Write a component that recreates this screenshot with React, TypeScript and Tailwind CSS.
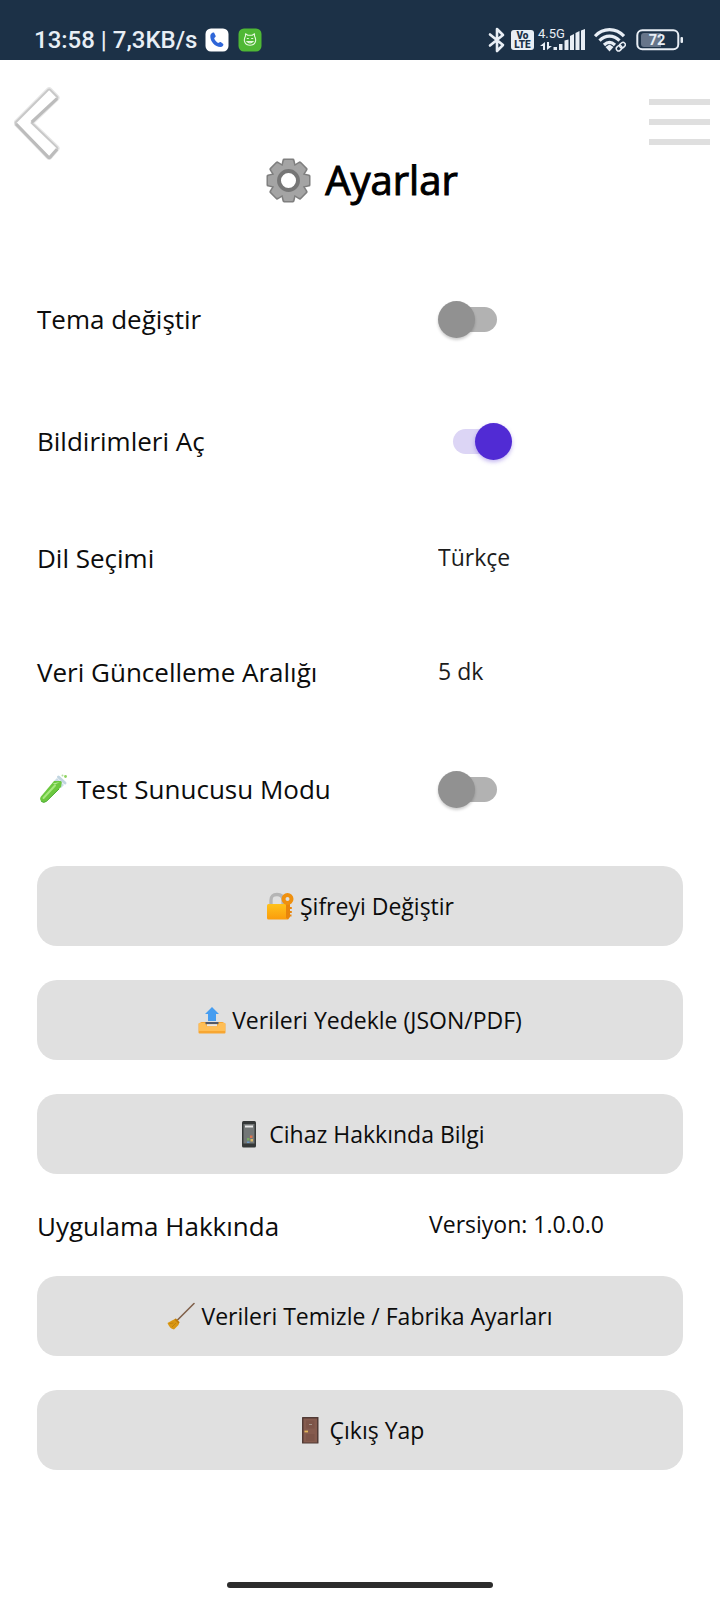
import { useState } from "react";
import type { ReactNode } from "react";

function StatusBar() {
  return (
    <div className="flex h-15 items-end justify-between bg-[#1c3147] pr-[37px] pb-2 pl-[34px] font-[Roboto,sans-serif] text-[#e8eef5]">
      <div className="flex h-6 items-center">
        <span className="text-2xl leading-6 font-medium">13:58 | 7,3KB/s</span>
        <svg className="ml-2 size-6" viewBox="0 0 24 24" aria-hidden="true">
          <rect x=".5" y=".5" width="23" height="23" rx="5.5" fill="#fff" />
          <path d="M9 4.500c-1.400-.5-3.500.8-3.700 3.300C5 13.500 10 19 15.500 19c2 0 3.300-1.500 2.800-3l-2.600-2c-1-.4-1.900.8-2.500 1-1.500-.5-3.600-3-4-4.700.3-.8 1.700-1.300 1.500-2.400z" fill="#2f66d8" />
        </svg>
        <svg className="ml-[9px] size-6" viewBox="0 0 24 24" aria-hidden="true">
          <rect x=".5" y=".5" width="23" height="23" rx="5.500" fill="#4fb835" />
          <path d="M7.500 8 7.500 5.800l2.300 1.400h4.400l2.300-1.400V8c2.500 4.500.8 9.300-4.500 9.300S5 12.500 7.500 8z" fill="none" stroke="#e4f8dd" strokeWidth="1.100" strokeLinejoin="round" />
          <path d="M8.800 10.500h2M13.200 10.500h2M9 13.500c1.500 1.800 4.500 1.800 6 0z" fill="none" stroke="#e4f8dd" strokeWidth="1.100" />
        </svg>
      </div>
      <div className="flex h-6 items-center">
        <svg className="h-[26px] w-[18px]" viewBox="0 0 18 26" fill="none" stroke="currentColor" strokeWidth="2.600" strokeLinejoin="round" strokeLinecap="round" aria-hidden="true">
          <path d="M2 7.500 15 18 9 24V2l6 6L2 18.500" />
        </svg>
        <span className="ml-[5px] flex h-5 w-[23px] flex-col items-center justify-center rounded-[3px] bg-[#e8eef5] text-[10px] leading-[9px] font-black text-[#1c3147]">
          <span>Vo</span>
          <span>LTE</span>
        </span>
        <svg className="ml-1 h-7 w-12 overflow-visible" viewBox="0 -2 48 28" fill="currentColor" aria-hidden="true">
          <text x="0" y="10" fontSize="13" fontFamily="Roboto, sans-serif">4.5G</text>
          <path d="M7 22h-2v-4H2l5-4zM9 14h2v4h3l-5 4zM15.500 19h3.500v3h-3.500zM21 16h3.500v6H21zM26.500 12.500l4-1V22h-4zM32 8l4-2v16h-4zM37.500 5l4-2v19h-4zM43 2.500 47 1v21h-4z" />
        </svg>
        <svg className="ml-2 h-6 w-8" viewBox="0 0 32 24" fill="none" stroke="currentColor" strokeWidth="3.200" aria-hidden="true">
          <path d="M1 8.200C9-.5 22-.5 30 8.200M5.500 12.700c6-6 14-6 20 0M10 17c3.500-3.300 7.500-3.300 11 0" />
          <path d="m11.500 19 4-2.500 4 2.500-4 4.500z" fill="currentColor" stroke="none" />
          <g strokeWidth="1.500" transform="rotate(-42 27 18.500)">
            <rect x="21.500" y="16.200" width="6" height="4.600" rx="2.300" />
            <rect x="26" y="16.200" width="6" height="4.600" rx="2.300" />
          </g>
        </svg>
        <svg className="ml-[10px] h-6 w-[47px]" viewBox="0 0 47 24" aria-hidden="true">
          <rect x="1.300" y="2.300" width="41" height="19" rx="5" fill="none" stroke="currentColor" strokeWidth="2" />
          <path d="M8 5h17v14H8q-3 0-3-3V8q0-3 3-3z" fill="#66758a" />
          <rect x="44.500" y="9" width="2.500" height="6" rx="1" fill="currentColor" />
          <text x="21" y="17" textAnchor="middle" fontSize="14.500" fontWeight="700" fontFamily="Roboto, sans-serif" fill="currentColor">72</text>
        </svg>
      </div>
    </div>
  );
}

const GEAR_ANGLES = [0, 45, 90, 135];

function GearIcon() {
  return (
    <svg className="size-[45px]" viewBox="0 0 46 46" aria-hidden="true">
      <g fill="#7f7f7f">
        {GEAR_ANGLES.map((angle) => (
          <path key={angle} transform={`rotate(${angle} 23 23)`} d="M18.500.5h9q1.500 0 1.700 1.500L31 10v26l-1.800 8q-.2 1.500-1.700 1.500h-9q-1.500 0-1.700-1.500L15 36V10l1.800-8q.2-1.500 1.700-1.500z" />
        ))}
        <circle cx="23" cy="23" r="17.500" />
      </g>
      <g fill="#a4a4a4">
        {GEAR_ANGLES.map((angle) => (
          <path key={angle} transform={`rotate(${angle} 23 23)`} d="M19.500 2h7q1 0 1.300 1L29.500 10v26l-1.700 7q-.3 1-1.300 1h-7q-1 0-1.300-1L16.500 36V10l1.700-7q.3-1 1.300-1z" />
        ))}
        <circle cx="23" cy="23" r="16" />
      </g>
      <circle cx="23" cy="23" r="9.700" fill="#fff" stroke="#767676" strokeWidth="4" />
    </svg>
  );
}

function TestTubeIcon() {
  return (
    <svg className="size-8 shrink-0" viewBox="0 0 32 32" aria-hidden="true">
      <path d="m20 5 7 7-3 3-7-7z" fill="#c9dbe6" />
      <path d="M17 8h8l-1 6L9.500 28.300q-3 2.200-5.300 0-2.200-2.300 0-5z" fill="#6cc83f" />
      <path d="m15.500 10.500 7.500-1.500-5 2.500z" fill="#b5e998" />
      <path d="M18 12.500 6.500 25" stroke="#a7e87f" strokeWidth="2" strokeLinecap="round" />
      <path d="M22 16 9.500 28.300q-3 2.200-5.300 0" fill="none" stroke="#4cab33" strokeWidth="1" />
      <path d="m21.500 4 6.500 6" stroke="#c2d5e0" strokeWidth="3" strokeLinecap="round" />
      <circle cx="28.500" cy="3.500" r="1.400" fill="#8fd460" />
      <circle cx="25.500" cy="2.500" r="1" fill="#b4dfa0" />
    </svg>
  );
}

function LockIcon() {
  return (
    <svg className="size-7" viewBox="0 0 28 28" aria-hidden="true">
      <defs>
        <linearGradient id="lock" x1="0" y1="0" x2="0" y2="1">
          <stop offset="0" stopColor="#ffc21b" />
          <stop offset="1" stopColor="#fb9c0c" />
        </linearGradient>
      </defs>
      <path d="M5 14V8q0-5.500 6-5.500T17 8v6" fill="none" stroke="#b5b5b5" strokeWidth="3.300" />
      <rect x="1" y="12" width="21.500" height="15.500" rx="1.500" fill="url(#lock)" />
      <path d="M20 10h4v15l-2 2.500-2-2z" fill="#e8850c" />
      <path d="M24 15h1.800v2H24zM24 19h1.800v2H24zM24 22.500h1.500v2H24z" fill="#e8850c" />
      <circle cx="21.500" cy="7" r="4" fill="#dfe0e0" stroke="#ef900f" strokeWidth="4" />
    </svg>
  );
}

function OutboxIcon() {
  return (
    <svg className="size-7" viewBox="0 0 28 28" aria-hidden="true">
      <path d="M3.500 16h21l3 1.500v9q0 1-1 1h-25q-1 0-1-1v-9z" fill="#f7a632" />
      <path d="M1 17h7.500v3.500h11V17H27v8H1z" fill="#ffbe55" />
      <path d="M7.500 16h13v2.200h-13z" fill="#535967" />
      <path d="M9 18.200h10v2H9z" fill="#e7e7ea" />
      <path d="M14 1 21 8h-3v7h-8V8H7z" fill="#469df0" />
    </svg>
  );
}

function PhoneIcon() {
  return (
    <svg className="size-7" viewBox="0 0 28 28" aria-hidden="true">
      <rect x="7" y="1" width="14" height="26.500" rx="1.500" fill="#353838" />
      <rect x="8.500" y="4" width="11" height="19.500" fill="#737777" />
      <path d="M10 5.500h8v2h-8z" fill="#e8e8e8" />
      <path d="M12 18h2.500v2.500H12z" fill="#78a862" />
      <path d="M15 15.500h2.500V18H15z" fill="#db7550" />
      <path d="M15.500 19H18v2.500h-2.500z" fill="#d8b968" />
      <path d="M12 21.500h2.500V23H12z" fill="#6b9acb" />
    </svg>
  );
}

function BroomIcon() {
  return (
    <svg className="size-7" viewBox="0 0 28 28" aria-hidden="true">
      <path d="M27 1.500 10 18.500" stroke="#80604b" strokeWidth="1.600" strokeLinecap="round" />
      <path d="m9 16.500 3.500 3.500-1 3-4.500 4.500q-4.500-1-6.500-6.500l4.500-2.500z" fill="#d99712" />
      <path d="m2.500 21.500 4-.5M5 25l4-4" stroke="#bb7c0c" strokeWidth=".8" />
      <path d="m8 17 4 4" stroke="#b9780f" strokeWidth="1.300" />
    </svg>
  );
}

function DoorIcon() {
  return (
    <svg className="size-7" viewBox="0 0 28 28" aria-hidden="true">
      <rect x="6" y="1" width="16.500" height="26.500" rx=".5" fill="#513a35" />
      <rect x="7.500" y="2.500" width="13.500" height="24" fill="#855b4e" />
      <path d="M10 4.500h8.500v8H10zM10 18h8.500v7H10z" fill="#7d5448" />
      <path d="M13 8.500h3" stroke="#a4968c" />
      <path d="M8.500 15.500h3.500" stroke="#e3b75b" strokeWidth="1.800" />
    </svg>
  );
}

function Switch({ id, initial = false }: { id: string; initial?: boolean }) {
  const [on, setOn] = useState(initial);
  return (
    <input
      id={id}
      type="checkbox"
      role="switch"
      checked={on}
      onChange={(e) => setOn(e.target.checked)}
      className="relative block h-9 w-[59px] cursor-pointer appearance-none before:absolute before:top-[6px] before:right-0 before:h-[25px] before:w-12 before:rounded-full before:bg-[#b2b2b2] after:absolute after:top-0 after:left-0 after:size-[37px] after:rounded-full after:bg-[#919191] after:shadow-[0_2px_3px_rgba(0,0,0,0.2)] checked:before:right-auto checked:before:left-0 checked:before:bg-[#dcd5f5] checked:after:right-0 checked:after:left-auto checked:after:bg-[#512bd4] checked:after:shadow-[0_2px_4px_rgba(81,43,212,0.35)]"
    />
  );
}

function Row({ id, label, height, icon, children }: { id: string; label: string; height: string; icon?: ReactNode; children: ReactNode }) {
  return (
    <div className={`grid grid-cols-[401fr_245fr] items-center ${height}`}>
      <label htmlFor={id} className="flex items-center gap-2 text-[26px] leading-9">
        {icon}
        {label}
      </label>
      {children}
    </div>
  );
}

function Picker({ id, options }: { id: string; options: string[] }) {
  return (
    <select id={id} className="w-full appearance-none bg-transparent pb-[2px] text-[23px] leading-8 text-[#1c1c1c]">
      {options.map((option) => (
        <option key={option}>{option}</option>
      ))}
    </select>
  );
}

function ActionButton({ icon, children }: { icon: ReactNode; children: ReactNode }) {
  return (
    <button type="button" className="flex h-20 w-full items-center justify-center gap-[6px] rounded-[20px] bg-[#e0e0e0] text-[23px] leading-8">
      {icon}
      {children}
    </button>
  );
}

export default function App() {
  return (
    <div className="flex min-h-screen flex-col bg-white font-['Open_Sans','Noto_Sans',sans-serif] text-[#0c0c0c]">
      <StatusBar />
      <header className="grid h-[214px] grid-cols-[1fr_auto_1fr] items-start pr-[10px] pl-[14px]">
        <button type="button" aria-label="Geri" className="mt-[27px] justify-self-start">
          <svg className="h-[74px] w-[47px]" viewBox="0 0 48 76" aria-hidden="true">
            <path d="M35 3q1-1 2 0l7 7q1 1 0 2L18 37l26 25q1 1 0 2l-7 8q-1 1-2 0L2 38q-1-1 0-2z" fill="none" stroke="#e6e6e6" strokeWidth="4.500" />
            <path d="M35 3q1-1 2 0l7 7q1 1 0 2L18 37l26 25q1 1 0 2l-7 8q-1 1-2 0L2 38q-1-1 0-2z" fill="#fff" stroke="#c8c8c8" strokeWidth="2" />
            <path d="M44 12 18 36M2 38l33 34q1 1 2 0l7-8" fill="none" stroke="#bcbcbc" strokeWidth="3.200" />
          </svg>
        </button>
        <h1 className="mt-[90px] flex items-center gap-[14px] text-[40px] leading-[60px] text-black [-webkit-text-stroke:1px_black]">
          <GearIcon />
          Ayarlar
        </h1>
        <button type="button" aria-label="Menü" className="mt-[39px] flex w-[61px] flex-col gap-[14px] justify-self-end">
          <span className="h-[6px] w-full bg-[#dfdfdf]" />
          <span className="h-[6px] w-full bg-[#dfdfdf]" />
          <span className="h-[6px] w-full bg-[#dfdfdf]" />
        </button>
      </header>
      <main className="flex flex-col gap-[34px] px-[37px]">
        <Row id="theme" label="Tema değiştir" height="h-[90px]">
          <Switch id="theme" />
        </Row>
        <Row id="notifications" label="Bildirimleri Aç" height="h-[86px]">
          <div className="pl-[15px]">
            <Switch id="notifications" initial />
          </div>
        </Row>
        <Row id="language" label="Dil Seçimi" height="h-20">
          <Picker id="language" options={["Türkçe", "English"]} />
        </Row>
        <Row id="interval" label="Veri Güncelleme Aralığı" height="h-20">
          <Picker id="interval" options={["5 dk", "10 dk", "30 dk"]} />
        </Row>
        <Row id="test-server" label="Test Sunucusu Modu" height="h-[86px]" icon={<TestTubeIcon />}>
          <Switch id="test-server" />
        </Row>
        <ActionButton icon={<LockIcon />}>Şifreyi Değiştir</ActionButton>
        <ActionButton icon={<OutboxIcon />}>Verileri Yedekle (JSON/PDF)</ActionButton>
        <ActionButton icon={<PhoneIcon />}>Cihaz Hakkında Bilgi</ActionButton>
        <div className="grid h-[34px] grid-cols-[392fr_254fr] items-center">
          <h2 className="text-[26px] leading-9">Uygulama Hakkında</h2>
          <p className="pb-1 text-[23px] leading-8">Versiyon: 1.0.0.0</p>
        </div>
        <ActionButton icon={<BroomIcon />}>Verileri Temizle / Fabrika Ayarları</ActionButton>
        <ActionButton icon={<DoorIcon />}>Çıkış Yap</ActionButton>
      </main>
      <div className="mt-auto flex justify-center pb-3">
        <div className="h-[6px] w-[37%] rounded-full bg-[#2c2c2c]" />
      </div>
    </div>
  );
}
